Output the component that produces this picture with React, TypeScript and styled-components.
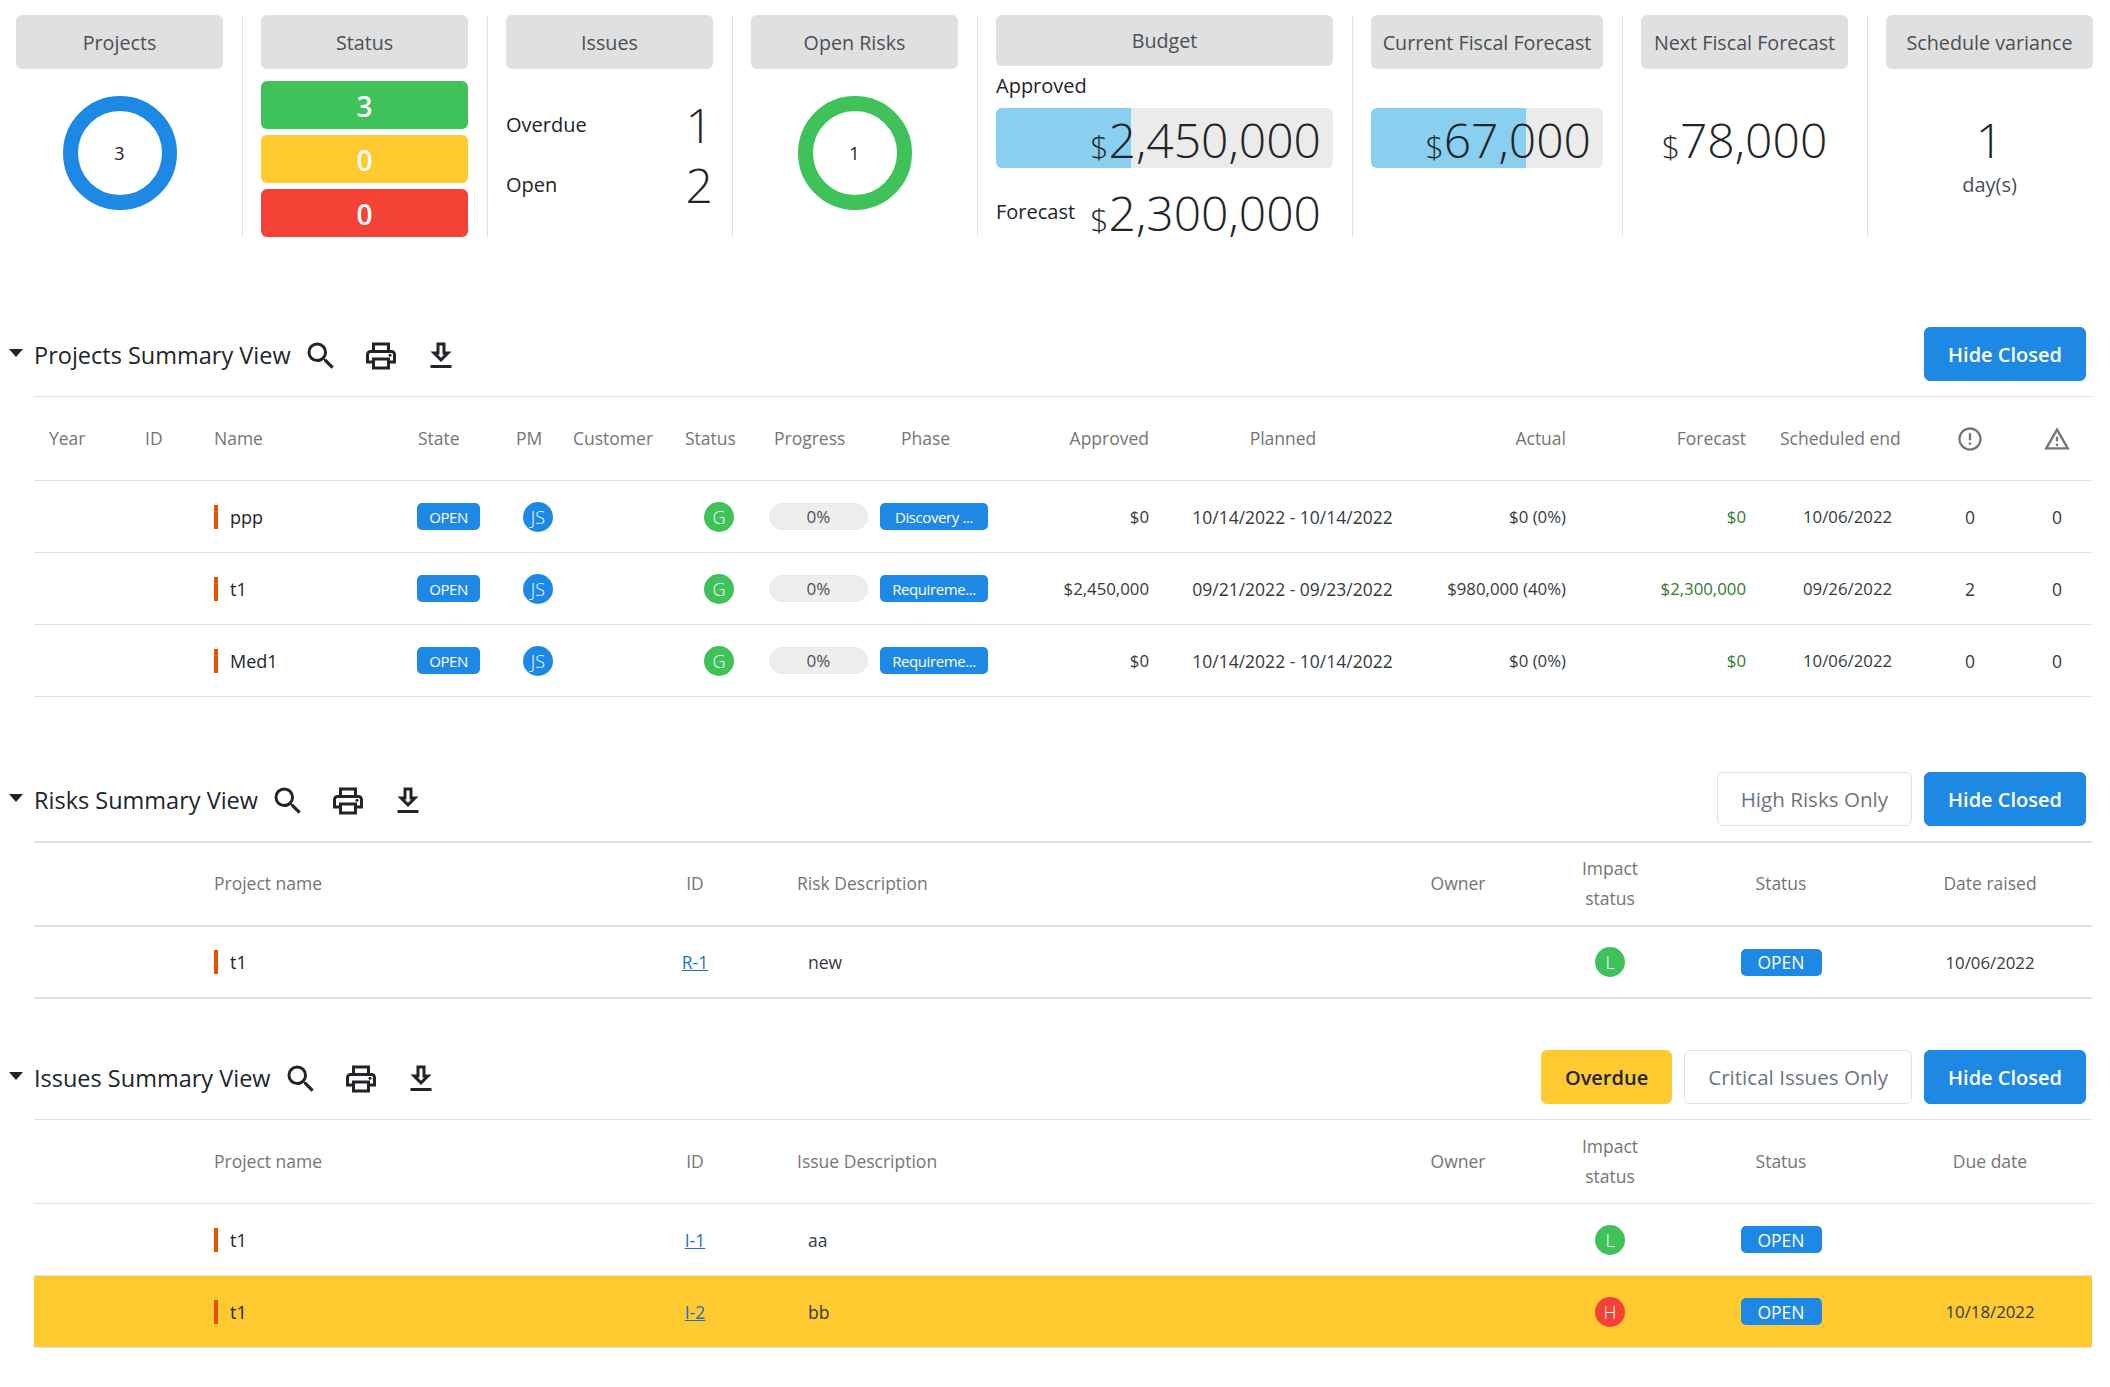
import React from "react";
import styled, { createGlobalStyle } from "styled-components";
import {
  MdSearch,
  MdOutlinePrint,
  MdErrorOutline,
  MdOutlineWarningAmber,
} from "react-icons/md";

const BLUE = "#1e88e5";
const GREEN = "#3fc25a";
const YELLOW = "#ffca30";
const RED = "#f44336";

const GlobalStyle = createGlobalStyle`
  html, body {
    margin: 0;
    padding: 0;
    background: #fff;
    color: #212529;
    font-family: "Open Sans", "Noto Sans", sans-serif;
    overflow: hidden;
  }
  * { box-sizing: border-box; }
`;

const Page = styled.div`
  width: 2110px;
  height: 1387px;
  padding-top: 15px;
`;

/* ---- top stat strip ---- */

const StatStrip = styled.div`
  display: flex;
  padding-left: 16px;
`;

const StatCol = styled.div<{ $w: number; $first?: boolean; $last?: boolean }>`
  width: ${({ $w, $first }) => $w + ($first ? 20 : 39)}px;
  height: 222px;
  padding: 0 19px 0 ${({ $first }) => ($first ? 0 : 18)}px;
  border-right: 1px solid ${({ $last }) => ($last ? "transparent" : "#e3e3e3")};
  flex: none;
`;

const StatTitle = styled.div<{ $short?: boolean }>`
  height: ${({ $short }) => ($short ? 51 : 54)}px;
  background: #e0e0e0;
  border-radius: 6px;
  display: flex;
  align-items: center;
  justify-content: center;
  font-size: 19.7px;
  color: #495057;
  white-space: nowrap;
`;

const Donut = styled.div<{ $color: string }>`
  width: 114px;
  height: 114px;
  margin: 27px auto 0;
  border: 15px solid ${({ $color }) => $color};
  border-radius: 50%;
  display: flex;
  align-items: center;
  justify-content: center;
  font-size: 18px;
`;

const StatusStack = styled.div`
  display: flex;
  flex-direction: column;
  gap: 6px;
  margin-top: 12px;
`;

const StatusBar = styled.div<{ $color: string }>`
  height: 48px;
  padding-top: 1px;
  background: ${({ $color }) => $color};
  border-radius: 6px;
  color: #fff;
  font-size: 28px;
  font-weight: 600;
  display: flex;
  align-items: center;
  justify-content: center;
`;

const IssueList = styled.div`
  margin-top: 26px;
`;

const IssueRow = styled.div`
  height: 60px;
  display: flex;
  align-items: center;
  justify-content: space-between;
  font-size: 20px;
`;

const IssueLabel = styled.span`
  margin-top: -2px;
`;

const BigNumber = styled.span`
  font-size: 48px;
  font-weight: 300;
  line-height: 60px;
  white-space: nowrap;
`;

const Dollar = styled.span`
  font-size: 32px;
  line-height: 1;
`;

const BudgetLabel = styled.div`
  font-size: 20px;
  line-height: 27px;
  margin-top: 6px;
  margin-bottom: 9px;
`;

const AmountBar = styled.div<{ $fill?: number }>`
  height: 60px;
  border-radius: 6px;
  padding: 4px 12px 0 0;
  display: flex;
  align-items: center;
  justify-content: flex-end;
  background: ${({ $fill }) =>
    `linear-gradient(to right, #89cff0 ${$fill}%, #ebebeb ${$fill}%)`};
`;

const ForecastRow = styled.div`
  display: flex;
  align-items: center;
  justify-content: space-between;
  margin-top: 15px;
  padding-right: 12px;
  font-size: 20px;
`;

const ForecastLabel = styled.span`
  margin-top: -4px;
`;

const CenteredAmount = styled.div`
  margin-top: 39px;
  height: 60px;
  padding-top: 4px;
  display: flex;
  align-items: center;
  justify-content: center;
`;

const BarSlot = styled.div`
  margin-top: 39px;
`;

const Unit = styled.div`
  margin-top: 3px;
  text-align: center;
  font-size: 20px;
  color: #495057;
`;

/* ---- summary sections ---- */

const Section = styled.section<{ $mt: number }>`
  margin-top: ${({ $mt }) => $mt}px;
`;

const SectionHead = styled.div`
  height: 54px;
  display: flex;
  align-items: center;
  padding: 0 24px 0 9px;
`;

const Caret = styled.svg`
  width: 14px;
  height: 8px;
  margin-right: 11px;
  margin-top: -2px;
  flex: none;
`;

const SectionTitle = styled.h2`
  margin: 2px 12px 0 0;
  font-size: 23.5px;
  font-weight: 400;
  color: #212529;
  white-space: nowrap;
`;

const IconRow = styled.div`
  display: flex;
  gap: 24px;
  margin-top: 3px;
  color: #212529;
  font-size: 36px;
  line-height: 0;
`;

const Actions = styled.div`
  margin-left: auto;
  display: flex;
  gap: 12px;
`;

const ActionButton = styled.button<{ $kind: "primary" | "warn" | "ghost" }>`
  height: 54px;
  padding: 0 23px;
  border-radius: 6px;
  font-family: inherit;
  font-size: ${({ $kind }) => ($kind === "ghost" ? 20.6 : 20)}px;
  font-weight: ${({ $kind }) => ($kind === "ghost" ? 400 : 600)};
  cursor: pointer;
  white-space: nowrap;
  color: ${({ $kind }) =>
    $kind === "primary" ? "#fff" : $kind === "warn" ? "#212529" : "#6c757d"};
  background: ${({ $kind }) =>
    $kind === "primary" ? BLUE : $kind === "warn" ? YELLOW : "#fff"};
  border: 1px solid
    ${({ $kind }) =>
      $kind === "primary" ? BLUE : $kind === "warn" ? YELLOW : "#dfe1e4"};
`;

const Table = styled.table<{ $thick?: boolean }>`
  width: 2058px;
  margin: 15px 0 0 34px;
  table-layout: fixed;
  border-collapse: collapse;
  border-top: ${({ $thick }) => ($thick ? 2 : 1)}px solid #e2e2e2;

  tr {
    border-bottom: ${({ $thick }) => ($thick ? 2 : 1)}px solid #e2e2e2;
  }
`;

const Col = styled.col<{ $w: number }>`
  width: ${({ $w }) => $w}px;
`;

const HeadRow = styled.tr`
  height: 84px;
`;

const BodyRow = styled.tr<{ $warn?: boolean }>`
  height: 72px;
  background: ${({ $warn }) => ($warn ? YELLOW : "transparent")};
`;

type Align = "left" | "center" | "right";

const Th = styled.th<{ $align?: Align; $pl?: number; $pr?: number }>`
  padding: 0 ${({ $pr }) => $pr ?? 15}px 2px ${({ $pl }) => $pl ?? 15}px;
  text-align: ${({ $align }) => $align ?? "left"};
  font-size: 17.5px;
  font-weight: 400;
  line-height: 30px;
  color: #757575;
  white-space: nowrap;
`;

const Td = styled.td<{
  $align?: Align;
  $pl?: number;
  $pr?: number;
  $green?: boolean;
  $tight?: boolean;
}>`
  padding: 0 ${({ $pr }) => $pr ?? 15}px 0 ${({ $pl }) => $pl ?? 15}px;
  text-align: ${({ $align }) => $align ?? "left"};
  font-size: ${({ $tight }) => ($tight ? 16.8 : 17.5)}px;
  color: ${({ $green }) => ($green ? "#2e7d32" : "#343a40")};
  white-space: nowrap;
`;

const ProjectName = styled.div`
  display: flex;
  align-items: center;
  gap: 12px;
  font-size: 18px;
  font-weight: 500;
  color: #212529;
`;

const NameMark = styled.span`
  width: 4px;
  height: 24px;
  background: #e65100;
  flex: none;
`;

const Tag = styled.span<{ $w: number; $large?: boolean }>`
  display: inline-flex;
  align-items: center;
  justify-content: center;
  width: ${({ $w }) => $w}px;
  height: 27px;
  border-radius: 5px;
  background: ${BLUE};
  color: #fff;
  font-size: ${({ $large }) => ($large ? 17.5 : 15)}px;
  letter-spacing: ${({ $large }) => ($large ? 0 : -0.4)}px;
  overflow: hidden;
`;

const Dot = styled.span<{ $color: string }>`
  display: inline-flex;
  align-items: center;
  justify-content: center;
  width: 30px;
  height: 30px;
  border-radius: 50%;
  background: ${({ $color }) => $color};
  color: #fff;
  font-size: 18px;
  font-weight: 300;
`;

const ProgressPill = styled.span`
  display: inline-flex;
  align-items: center;
  justify-content: center;
  width: 99px;
  height: 27px;
  border-radius: 14px;
  background: #eeeeee;
  border: 1px solid #e7e7e7;
  color: #495057;
  font-size: 17px;
`;

const HeadIcon = styled.span`
  display: inline-flex;
  color: #757575;
  font-size: 28px;
  vertical-align: middle;
`;

const RefLink = styled.a`
  color: #1e6fc9;
  text-decoration: underline;
  font-size: 17.5px;
`;

const DownloadIcon = () => (
  <svg width="1em" height="1em" viewBox="0 0 24 24" fill="currentColor">
    <path d="M19 9h-4V3H9v6H5l7 7 7-7zm-8 2V5h2v6h1.17L12 13.17 9.83 11H11zm-6 7h14v2H5z" />
  </svg>
);

const Caretted = ({ title }: { title: string }) => (
  <>
    <Caret viewBox="0 0 14 8">
      <polygon points="0,0 14,0 7,8" fill="#212529" />
    </Caret>
    <SectionTitle>{title}</SectionTitle>
    <IconRow>
      <MdSearch />
      <MdOutlinePrint />
      <DownloadIcon />
    </IconRow>
  </>
);

const Amount = ({ value }: { value: string }) => (
  <BigNumber>
    <Dollar>$</Dollar>
    {value}
  </BigNumber>
);

const projects = [
  { name: "ppp", phase: "Discovery ...", approved: "$0", planned: "10/14/2022 - 10/14/2022", actual: "$0 (0%)", forecast: "$0", end: "10/06/2022", issues: 0, risks: 0 },
  { name: "t1", phase: "Requireme...", approved: "$2,450,000", planned: "09/21/2022 - 09/23/2022", actual: "$980,000 (40%)", forecast: "$2,300,000", end: "09/26/2022", issues: 2, risks: 0 },
  { name: "Med1", phase: "Requireme...", approved: "$0", planned: "10/14/2022 - 10/14/2022", actual: "$0 (0%)", forecast: "$0", end: "10/06/2022", issues: 0, risks: 0 },
];

const issues = [
  { id: "I-1", text: "aa", impact: "L", color: GREEN, due: "", warn: false },
  { id: "I-2", text: "bb", impact: "H", color: RED, due: "10/18/2022", warn: true },
];

const summaryCols = [165, 409, 174, 588, 176, 128, 214, 204];

const SummaryCols = () => (
  <colgroup>
    {summaryCols.map((w, i) => (
      <Col key={i} $w={w} />
    ))}
  </colgroup>
);

const SummaryHead = ({ kind, date }: { kind: string; date: string }) => (
  <thead>
    <HeadRow>
      <Th />
      <Th>Project name</Th>
      <Th $align="center">ID</Th>
      <Th>{kind} Description</Th>
      <Th $align="center">Owner</Th>
      <Th $align="center">
        Impact
        <br />
        status
      </Th>
      <Th $align="center">Status</Th>
      <Th $align="center">{date}</Th>
    </HeadRow>
  </thead>
);

const projectCols = [96, 69, 204, 98, 57, 112, 89, 119, 122, 164, 246, 171, 180, 157, 104, 70];

export default function App() {
  return (
    <Page>
      <GlobalStyle />
      <StatStrip>
        <StatCol $w={207} $first>
          <StatTitle>Projects</StatTitle>
          <Donut $color={BLUE}>3</Donut>
        </StatCol>
        <StatCol $w={206}>
          <StatTitle>Status</StatTitle>
          <StatusStack>
            <StatusBar $color={GREEN}>3</StatusBar>
            <StatusBar $color={YELLOW}>0</StatusBar>
            <StatusBar $color={RED}>0</StatusBar>
          </StatusStack>
        </StatCol>
        <StatCol $w={206}>
          <StatTitle>Issues</StatTitle>
          <IssueList>
            <IssueRow>
              <IssueLabel>Overdue</IssueLabel>
              <BigNumber>1</BigNumber>
            </IssueRow>
            <IssueRow>
              <IssueLabel>Open</IssueLabel>
              <BigNumber>2</BigNumber>
            </IssueRow>
          </IssueList>
        </StatCol>
        <StatCol $w={206}>
          <StatTitle>Open Risks</StatTitle>
          <Donut $color={GREEN}>1</Donut>
        </StatCol>
        <StatCol $w={336}>
          <StatTitle $short>Budget</StatTitle>
          <BudgetLabel>Approved</BudgetLabel>
          <AmountBar $fill={40}>
            <Amount value="2,450,000" />
          </AmountBar>
          <ForecastRow>
            <ForecastLabel>Forecast</ForecastLabel>
            <Amount value="2,300,000" />
          </ForecastRow>
        </StatCol>
        <StatCol $w={231}>
          <StatTitle>Current Fiscal Forecast</StatTitle>
          <BarSlot>
            <AmountBar $fill={67}>
              <Amount value="67,000" />
            </AmountBar>
          </BarSlot>
        </StatCol>
        <StatCol $w={206}>
          <StatTitle>Next Fiscal Forecast</StatTitle>
          <CenteredAmount>
            <Amount value="78,000" />
          </CenteredAmount>
        </StatCol>
        <StatCol $w={206} $last>
          <StatTitle>Schedule variance</StatTitle>
          <CenteredAmount>
            <BigNumber>1</BigNumber>
          </CenteredAmount>
          <Unit>day(s)</Unit>
        </StatCol>
      </StatStrip>

      <Section $mt={90}>
        <SectionHead>
          <Caretted title="Projects Summary View" />
          <Actions>
            <ActionButton $kind="primary">Hide Closed</ActionButton>
          </Actions>
        </SectionHead>
        <Table>
          <colgroup>
            {projectCols.map((w, i) => (
              <Col key={i} $w={w} />
            ))}
          </colgroup>
          <thead>
            <HeadRow>
              <Th>Year</Th>
              <Th>ID</Th>
              <Th>Name</Th>
              <Th>State</Th>
              <Th>PM</Th>
              <Th>Customer</Th>
              <Th>Status</Th>
              <Th>Progress</Th>
              <Th $pl={23}>Phase</Th>
              <Th $align="right">Approved</Th>
              <Th $align="center" $pr={23}>
                Planned
              </Th>
              <Th $align="right">Actual</Th>
              <Th $align="right">Forecast</Th>
              <Th $pl={19}>Scheduled end</Th>
              <Th $align="center">
                <HeadIcon>
                  <MdErrorOutline />
                </HeadIcon>
              </Th>
              <Th $align="center">
                <HeadIcon>
                  <MdOutlineWarningAmber />
                </HeadIcon>
              </Th>
            </HeadRow>
          </thead>
          <tbody>
            {projects.map((p) => (
              <BodyRow key={p.name}>
                <Td />
                <Td />
                <Td>
                  <ProjectName>
                    <NameMark />
                    {p.name}
                  </ProjectName>
                </Td>
                <Td $pl={14}>
                  <Tag $w={63}>OPEN</Tag>
                </Td>
                <Td $pl={22} $pr={0}>
                  <Dot $color={BLUE}>JS</Dot>
                </Td>
                <Td />
                <Td $pl={34} $pr={0}>
                  <Dot $color={GREEN}>G</Dot>
                </Td>
                <Td $pl={10} $pr={0}>
                  <ProgressPill>0%</ProgressPill>
                </Td>
                <Td $pl={2} $pr={0}>
                  <Tag $w={108}>{p.phase}</Tag>
                </Td>
                <Td $align="right" $tight>
                  {p.approved}
                </Td>
                <Td $align="center" $pl={15} $pr={4}>
                  {p.planned}
                </Td>
                <Td $align="right" $tight>
                  {p.actual}
                </Td>
                <Td $align="right" $green $tight>
                  {p.forecast}
                </Td>
                <Td $pl={42} $pr={0} $tight>
                  {p.end}
                </Td>
                <Td $align="center">{p.issues}</Td>
                <Td $align="center">{p.risks}</Td>
              </BodyRow>
            ))}
          </tbody>
        </Table>
      </Section>

      <Section $mt={75}>
        <SectionHead>
          <Caretted title="Risks Summary View" />
          <Actions>
            <ActionButton $kind="ghost">High Risks Only</ActionButton>
            <ActionButton $kind="primary">Hide Closed</ActionButton>
          </Actions>
        </SectionHead>
        <Table $thick>
          <SummaryCols />
          <SummaryHead kind="Risk" date="Date raised" />
          <tbody>
            <BodyRow>
              <Td />
              <Td>
                <ProjectName>
                  <NameMark />
                  t1
                </ProjectName>
              </Td>
              <Td $align="center">
                <RefLink href="#">R-1</RefLink>
              </Td>
              <Td $pl={26}>new</Td>
              <Td />
              <Td $align="center">
                <Dot $color={GREEN}>L</Dot>
              </Td>
              <Td $align="center">
                <Tag $w={81} $large>
                  OPEN
                </Tag>
              </Td>
              <Td $align="center" $tight>
                10/06/2022
              </Td>
            </BodyRow>
          </tbody>
        </Table>
      </Section>

      <Section $mt={51}>
        <SectionHead>
          <Caretted title="Issues Summary View" />
          <Actions>
            <ActionButton $kind="warn">Overdue</ActionButton>
            <ActionButton $kind="ghost">Critical Issues Only</ActionButton>
            <ActionButton $kind="primary">Hide Closed</ActionButton>
          </Actions>
        </SectionHead>
        <Table>
          <SummaryCols />
          <SummaryHead kind="Issue" date="Due date" />
          <tbody>
            {issues.map((row) => (
              <BodyRow key={row.id} $warn={row.warn}>
                <Td />
                <Td>
                  <ProjectName>
                    <NameMark />
                    t1
                  </ProjectName>
                </Td>
                <Td $align="center">
                  <RefLink href="#">{row.id}</RefLink>
                </Td>
                <Td $pl={26}>{row.text}</Td>
                <Td />
                <Td $align="center">
                  <Dot $color={row.color}>{row.impact}</Dot>
                </Td>
                <Td $align="center">
                  <Tag $w={81} $large>
                    OPEN
                  </Tag>
                </Td>
                <Td $align="center" $tight>
                  {row.due}
                </Td>
              </BodyRow>
            ))}
          </tbody>
        </Table>
      </Section>
    </Page>
  );
}
